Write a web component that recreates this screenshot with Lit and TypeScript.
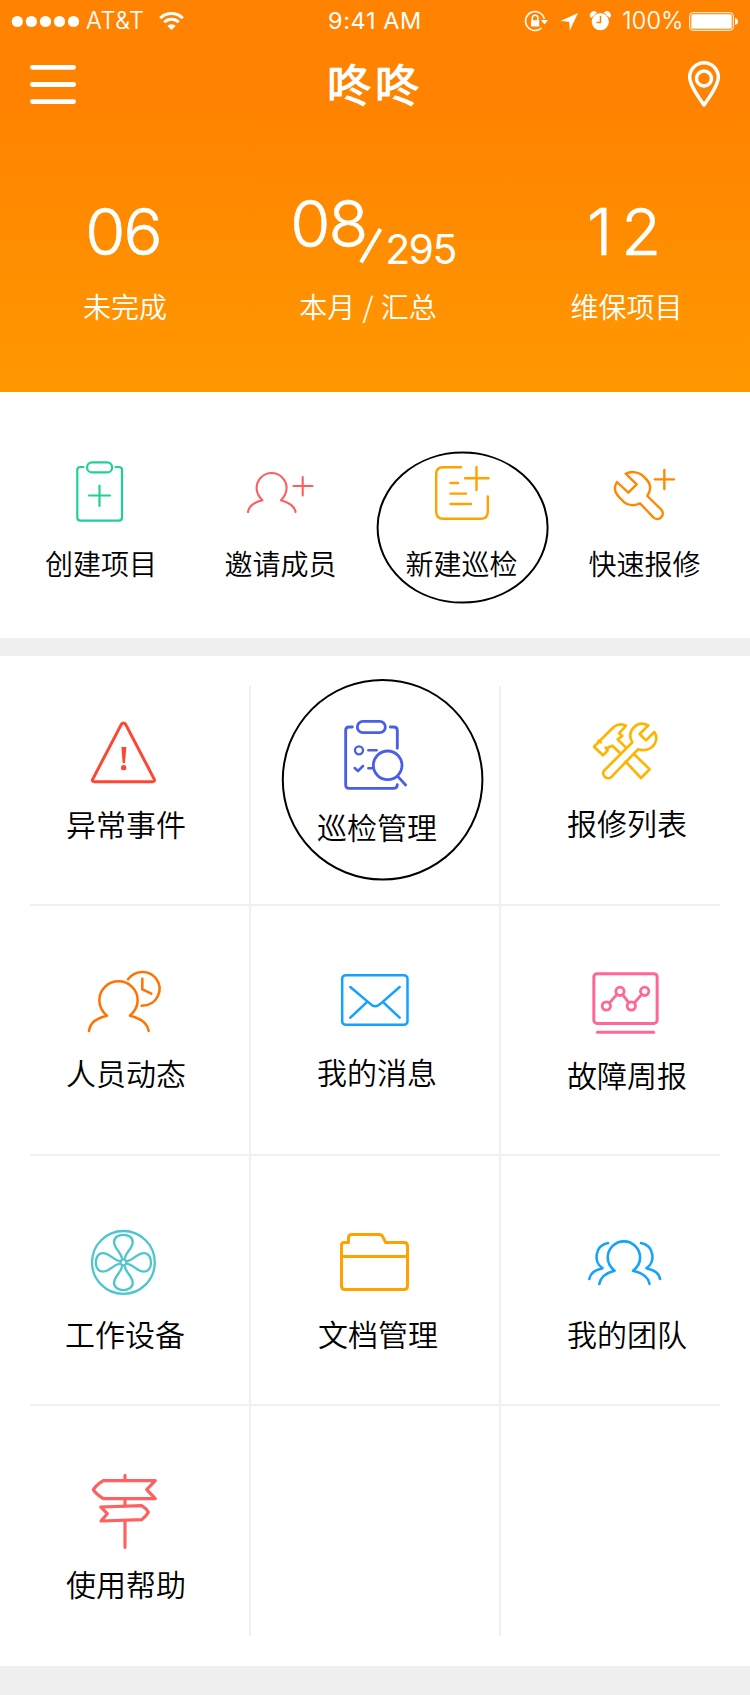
import { LitElement, html, svg, css, SVGTemplateResult } from "lit";
import { customElement, property } from "lit/decorators.js";

interface Item {
  label: string;
  icon: SVGTemplateResult;
  color: string;
  x: number;
  y: number;
  w: number;
  h: number;
  indent?: number;
}

const third = (x: number, y: number) => `translate(${x} ${y}) scale(0.33333)`;

const clipboardAdd = svg`<g stroke-width="2.2">
  <path d="M83.5 467H80.500Q77.300 467 77.300 470V517.500Q77.300 520.700 80.500 520.700H118.700Q122 520.700 122 517.500V470Q122 467 118.700 467H115.500"/>
  <rect x="87.100" y="462.400" width="25" height="10" rx="5"/>
  <path d="M89 495.500H110M99.500 485.500V506"/></g>`;

const personAdd = svg`<g stroke-width="2.1">
  <path d="M248 512C249 505.500 254 502.300 262.500 500.300C258.500 496.500 256.600 492.500 256.600 488A15 15 0 0 1 286.600 488C286.600 492.500 284.500 496.500 281 500.300C289 502.500 294.500 506 295.600 512"/>
  <path d="M293.500 486H312.500M302.700 477V495.500"/></g>`;

const formAdd = svg`<g stroke-width="2.400">
  <path d="M461 467.200H443.200Q436.200 467.200 436.200 474.200V511.800Q436.200 518.800 443.200 518.800H480.800Q487.800 518.800 487.800 511.800V496.500"/>
  <path d="M450.500 483H458M450.500 493.600H466M450.500 504H471M465 478.300H488.500M476.500 467V490"/></g>`;

const wrenchAdd = svg`<g transform=${third(375, 440)} stroke-width="7">
  <path d="M752 101C765 94 788 93 803 107L815 119C827 132 829 150 817 168L858 208C872 224 854 246 836 233L795 190C780 199 759 197 748 187L733 172C718 157 717 140 726 126L760 158L785 133Z"/>
  <path d="M839 118H897M868 90V147"/></g>`;

const warning = svg`<g transform=${third(0, 670)} stroke-width="9">
  <path d="M364 163Q370 155 377 163L463 328Q465 335 457 335H284Q275 335 278 328Z"/>
  <path class="solid" d="M364 231H379L375 279H368Z"/><circle class="solid" cx="371" cy="293" r="8"/></g>`;

const inspect = svg`<g transform=${third(0, 670)} stroke-width="8.500">
  <path d="M1057 171H1047Q1037 171 1037 181V345Q1037 355 1047 355H1180Q1192 355 1192 344M1171 171H1181Q1192 171 1192 182V235"/>
  <rect x="1072" y="154" width="84" height="34" rx="17"/>
  <circle cx="1163" cy="286" r="43"/><path d="M1194 320L1217 345"/>
  <circle cx="1077" cy="241" r="12" stroke-width="7"/>
  <path stroke-width="7.500" d="M1105 241H1130M1064 294L1074 303L1089 288M1105 295H1119"/></g>`;

const tools = svg`<g transform=${third(375, 670)} stroke-width="8">
  <path d="M772 217L688 301C676 316 699 334 711 319L789 238C806 244 824 238 832 230C845 218 848 200 838 186L813 211L794 192L820 166C803 158 788 160 777 172C764 184 762 202 772 217Z"/>
  <path d="M752 232L728 208L742 198L732 190L753 167C740 160 728 162 716 171L672 215L671 216L657 230L684 256L697 243L694 235L712 227L735 249"/>
  <path d="M677 217L671 212M698 239L692 233M752 275L798 324L824 298L778 253"/></g>`;

const personClock = svg`<g transform=${third(0, 950)} stroke-width="7.500">
  <path d="M267 243C271 217 289 205 321 197C305 184 298 169 298 151A57.500 57.500 0 0 1 413 151C413 169 405 184 390 197C422 205 443 220 446 243"/>
  <path d="M384 88C404 60 446 58 467 84C494 119 471 167 425 167M427 86V118L454 131"/></g>`;

const mail = svg`<g transform=${third(0, 950)} stroke-width="7.500">
  <rect x="1026.500" y="75.500" width="196" height="149" rx="11"/>
  <path d="M1051 111L1110 161Q1125 177 1142 161L1199 111M1051 203L1100 157M1199 203L1150 157"/></g>`;

const report = svg`<g transform=${third(375, 950)} stroke-width="9">
  <rect x="656.500" y="71" width="190" height="149.500" rx="10"/>
  <path d="M667 247H836"/>
  <g stroke-width="8.500"><circle cx="694" cy="168" r="12.500"/><circle cx="735" cy="124" r="12.500"/><circle cx="769" cy="168" r="12.500"/><circle cx="809" cy="124" r="12.500"/>
  <path d="M703 159L726 133M743 134L761 158M778 159L800 133"/></g></g>`;

const petal = "M-1.500 -4.500C-3 -11 -9.300 -14 -9.300 -20.500C-9.300 -30 9.300 -30 9.300 -20.500C9.300 -14 3 -11 1.500 -4.500";
const fan = svg`<g transform="translate(123.400 1262.400)" stroke-width="2.300">
  <circle r="31.400"/><circle r="3"/>
  ${[0, 90, 180, 270].map((a) => svg`<path d=${petal} transform="rotate(${a})"/>`)}</g>`;

const folder = svg`<g stroke-width="3">
  <path d="M341.500 1286.500V1245Q341.500 1242.500 344 1242.500H348.500V1238Q348.500 1234.500 352 1234.500H379Q382 1234.500 383 1237L385.500 1242.500H404Q407.500 1242.500 407.500 1246V1286Q407.500 1289.500 404 1289.500H345Q341.500 1289.500 341.500 1286Z"/>
  <path d="M341.500 1256.500H407.500"/></g>`;

const team = svg`<g stroke-width="2.600">
  <path d="M599.300 1284C600.500 1277 605 1273 614.600 1270.700C609.500 1266.500 607.700 1262 607.700 1257.500A16.200 16.200 0 0 1 640.100 1257.500C640.100 1262 638 1267 633 1270.700C643 1273 648.500 1277 649.500 1284"/>
  <path d="M608 1243C595 1245.500 593 1262 602.500 1268.200C594 1270.500 590.500 1273 589.300 1279M641 1243C654 1245.500 656 1262 646.500 1268.200C655 1270.500 659 1273 660 1279"/></g>`;

const signpost = svg`<g transform=${third(0, 1450)} stroke-width="9.500">
  <path d="M310 92H466L440 119L466 146H310C297 138 286 129 280 119C286 109 297 100 310 92Z"/>
  <path d="M302 171L425 167Q439 175 445 187Q439 199 425 209L303 213L322 191Z"/>
  <path d="M375 76V92M375 146V168M375 212V292"/></g>`;

const QUICK: Item[] = [
  { label: "创建项目", icon: clipboardAdd, color: "#1fd09a", x: 9, y: 392, w: 182, h: 151, indent: 2 },
  { label: "邀请成员", icon: personAdd, color: "#ff5e5e", x: 191, y: 392, w: 181, h: 151, indent: -2 },
  { label: "新建巡检", icon: formAdd, color: "#ffa200", x: 372, y: 392, w: 182, h: 151, indent: -3 },
  { label: "快速报修", icon: wrenchAdd, color: "#ff8800", x: 554, y: 392, w: 181, h: 151 },
];

const ROWS: Item[][] = [
  [
    { label: "异常事件", icon: warning, color: "#ff4632", x: 0, y: 686, w: 249, h: 117 },
    { label: "巡检管理", icon: inspect, color: "#4a5fe8", x: 251, y: 686, w: 248, h: 120, indent: 1 },
    { label: "报修列表", icon: tools, color: "#ffb400", x: 501, y: 686, w: 249, h: 116 },
  ],
  [
    { label: "人员动态", icon: personClock, color: "#ff7200", x: 0, y: 906, w: 249, h: 146 },
    { label: "我的消息", icon: mail, color: "#14a2ff", x: 251, y: 906, w: 248, h: 145, indent: 1 },
    { label: "故障周报", icon: report, color: "#ff6896", x: 501, y: 906, w: 249, h: 148 },
  ],
  [
    { label: "工作设备", icon: fan, color: "#4bc6cc", x: 0, y: 1156, w: 249, h: 157, indent: -2 },
    { label: "文档管理", icon: folder, color: "#ffa200", x: 251, y: 1156, w: 248, h: 157, indent: 3 },
    { label: "我的团队", icon: team, color: "#14a2ff", x: 501, y: 1156, w: 249, h: 157 },
  ],
  [{ label: "使用帮助", icon: signpost, color: "#ff6060", x: 0, y: 1406, w: 249, h: 157 }],
];

@customElement("menu-item")
class MenuItem extends LitElement {
  @property({ attribute: false }) item!: Item;

  static styles = css`
    :host { display: block; }
    .icon { display: block; fill: none; stroke: currentColor; stroke-linecap: round; stroke-linejoin: round; }
    .solid { fill: currentColor; stroke: none; }
    .label { height: 40px; line-height: 40px; text-align: center; color: #000; white-space: nowrap; padding-left: var(--label-shift, 0px); }
  `;

  render() {
    const { x, y, w, h, color, icon, label, indent = 0 } = this.item;
    return html`<svg class="icon" width=${w} height=${h} viewBox="${x} ${y} ${w} ${h}" color=${color}>${icon}</svg>
      <div class="label" style="text-indent:${indent}px">${label}</div>`;
  }
}

@customElement("app-root")
class AppRoot extends LitElement {
  static styles = css`
    :host {
      display: block; position: relative; width: 750px; height: 1695px; background: #f0f0f0; overflow: hidden;
      font-family: "Noto Sans CJK SC DemiLight", "Noto Sans CJK SC", sans-serif; font-weight: 350; color: #000;
    }
    svg { display: block; }
    .hero { height: 392px; color: #fff; background: linear-gradient(#ff8300 0, #ff8300 110px, #ff9800 392px); }
    .status { display: grid; grid-template-columns: 1fr auto 1fr; height: 40px; align-items: center; font: 400 23.5px/42px Inter, sans-serif; }
    .clock { letter-spacing: 0.6px; }
    .side { display: flex; align-items: center; height: 40px; }
    .end { justify-content: flex-end; }
    .carrier { width: 61px; letter-spacing: 0.6px; font-weight: 300; -webkit-text-stroke: 0.2px #fff; }
    .percent { letter-spacing: 0.2px; margin-right: 4.6px; font-weight: 300; -webkit-text-stroke: 0.2px #fff; }
    .nav { display: flex; justify-content: space-between; align-items: center; height: 90px; padding: 0 28px 0 30px; }
    .title { font-size: 44px; font-weight: 700; letter-spacing: 4px; line-height: 80px; margin: 0; padding: 0 12px 4px 0; }
    .stats { display: grid; grid-template-columns: repeat(3, 250px); padding-top: 53px; }
    .stat { text-align: center; }
    .figure { height: 96px; line-height: 97px; font-family: Inter, sans-serif; font-size: 65px; font-weight: 300; letter-spacing: -2px; padding-right: 4px; -webkit-text-stroke: 0.6px #fff; }
    .projects { letter-spacing: 9px; padding: 0 0 0 7px; }
    .ratio { display: flex; justify-content: center; padding: 0 4px 0 0; }
    .month { line-height: 82px; }
    .total { font-size: 41px; font-weight: 400; line-height: 132px; letter-spacing: -1.6px; -webkit-text-stroke: 0; }
    .slash { margin: 45px 2px 0 -7px; }
    .caption { font-size: 28px; line-height: 40px; margin-top: 7px; }
    .shift { padding-right: 14px; word-spacing: 1px; }
    .nudge { padding-left: 3px; }
    .quick { display: flex; height: 246px; background: #fff; padding-left: 9px; font-size: 28px; }
    .board { margin-top: 18px; padding: 30px 0; background: #fff; font-size: 30px; --label-shift: 3px; }
    .row { display: flex; height: 248px; }
    .first { height: 218px; }
    .last { height: 230px; }
    .cell { width: 248px; border-right: 2px solid #f0f0f0; }
    .cell:first-child { width: 249px; }
    .cell:last-child { width: 249px; border-right: 0; }
    .rule { height: 2px; margin: 0 30px; background: #f0f0f0; }
    .marks { position: absolute; inset: 0; fill: none; stroke: #000; stroke-width: 2; pointer-events: none; }
  `;

  render() {
    return html`
      <header class="hero">
        <div class="status">
          <div class="side">
            <svg width="86" height="40" fill="#fff">
              ${[17.3, 31.4, 45.5, 59.5, 73.5].map((cx) => svg`<circle cx=${cx} cy="20.500" r="5.600"/>`)}
            </svg>
            <span class="carrier">AT&amp;T</span>
            <svg width="40" height="40" viewBox="147 0 40 40" fill="none" stroke="#fff" stroke-width="3">
              <path d="M160.200 17.200A16 16 0 0 1 182.800 17.200M164.200 21.300A10.300 10.300 0 0 1 178.800 21.300"/>
              <path fill="#fff" stroke="none" d="M171.500 29L167.300 24.900A6 6 0 0 1 175.700 24.900Z"/>
            </svg>
          </div>
          <span class="clock">9:41 AM</span>
          <div class="side end">
            <svg width="102" height="40" viewBox="520 0 102 40" fill="#fff">
              <path fill="none" stroke="#fff" stroke-width="1.500" d="M544.300 18A9.500 9.500 0 1 0 541.500 27"/>
              <path d="M541 19H548L544.500 23.500ZM531 19.200H539.200V25.500H531Z"/>
              <path fill="none" stroke="#fff" stroke-width="1.500" d="M532.300 20V17A2.800 2.800 0 0 1 537.900 17V20"/>
              <path d="M560.500 20L578 12L569.800 29.500L569.200 20.800Z"/>
              <circle cx="600.300" cy="20.600" r="8.600"/>
              <path d="M591 17A4 4 0 0 1 597 11.500ZM609.700 17A4 4 0 0 0 603.700 11.500Z"/>
              <path fill="none" stroke="#ff8300" stroke-width="1.500" d="M600.500 15V21.500H596.500"/>
            </svg>
            <span class="percent">100%</span>
            <svg width="62" height="40" viewBox="688 0 62 40" fill="#fff">
              <rect x="689.700" y="11.700" width="43.600" height="17.600" rx="3" fill="none" stroke="#fff"/>
              <rect x="691.300" y="13.300" width="40.400" height="14.400" rx="1.500"/>
              <path d="M735 17Q738 18 738 20.500Q738 23 735 24Z"/>
            </svg>
          </div>
        </div>
        <nav class="nav">
          <svg width="46" height="90" viewBox="30 40 46 90" stroke="#fff" stroke-width="4.800" stroke-linecap="round">
            <path d="M32.400 67.300H73.600M32.400 84.500H73.600M32.400 101.600H73.600"/>
          </svg>
          <h1 class="title">咚咚</h1>
          <svg width="36" height="90" viewBox="686 40 36 90" fill="none" stroke="#fff" stroke-width="3.500" stroke-linejoin="round">
            <path d="M704 105C700 99 689.700 86 689.700 77A14.300 14.300 0 0 1 718.300 77C718.300 86 708 99 704 105Z"/>
            <circle cx="704" cy="78.500" r="7.500"/>
          </svg>
        </nav>
        <div class="stats">
          <div class="stat"><div class="figure">06</div><div class="caption">未完成</div></div>
          <div class="stat">
            <div class="figure ratio">
              <span class="month">08</span>
              <svg class="slash" width="24" height="36" viewBox="0 0 24 36" stroke="#fff" stroke-width="4"><path d="M2 34.500L21.500 1"/></svg>
              <span class="total">295</span>
            </div>
            <div class="caption shift">本月 / 汇总</div>
          </div>
          <div class="stat"><div class="figure projects">12</div><div class="caption nudge">维保项目</div></div>
        </div>
      </header>
      <section class="quick">${QUICK.map((item) => html`<menu-item .item=${item}></menu-item>`)}</section>
      <section class="board">
        ${ROWS.map((row, i) => html`
          ${i ? html`<div class="rule"></div>` : null}
          <div class="row ${i === 0 ? "first" : i === 3 ? "last" : ""}">
            ${[0, 1, 2].map((c) => html`<div class="cell">${row[c] ? html`<menu-item .item=${row[c]}></menu-item>` : null}</div>`)}
          </div>`)}
      </section>
      <svg class="marks" width="750" height="1695">
        <ellipse cx="462.600" cy="527.600" rx="85" ry="75"/>
        <circle cx="382.600" cy="779.700" r="99.800"/>
      </svg>
    `;
  }
}
